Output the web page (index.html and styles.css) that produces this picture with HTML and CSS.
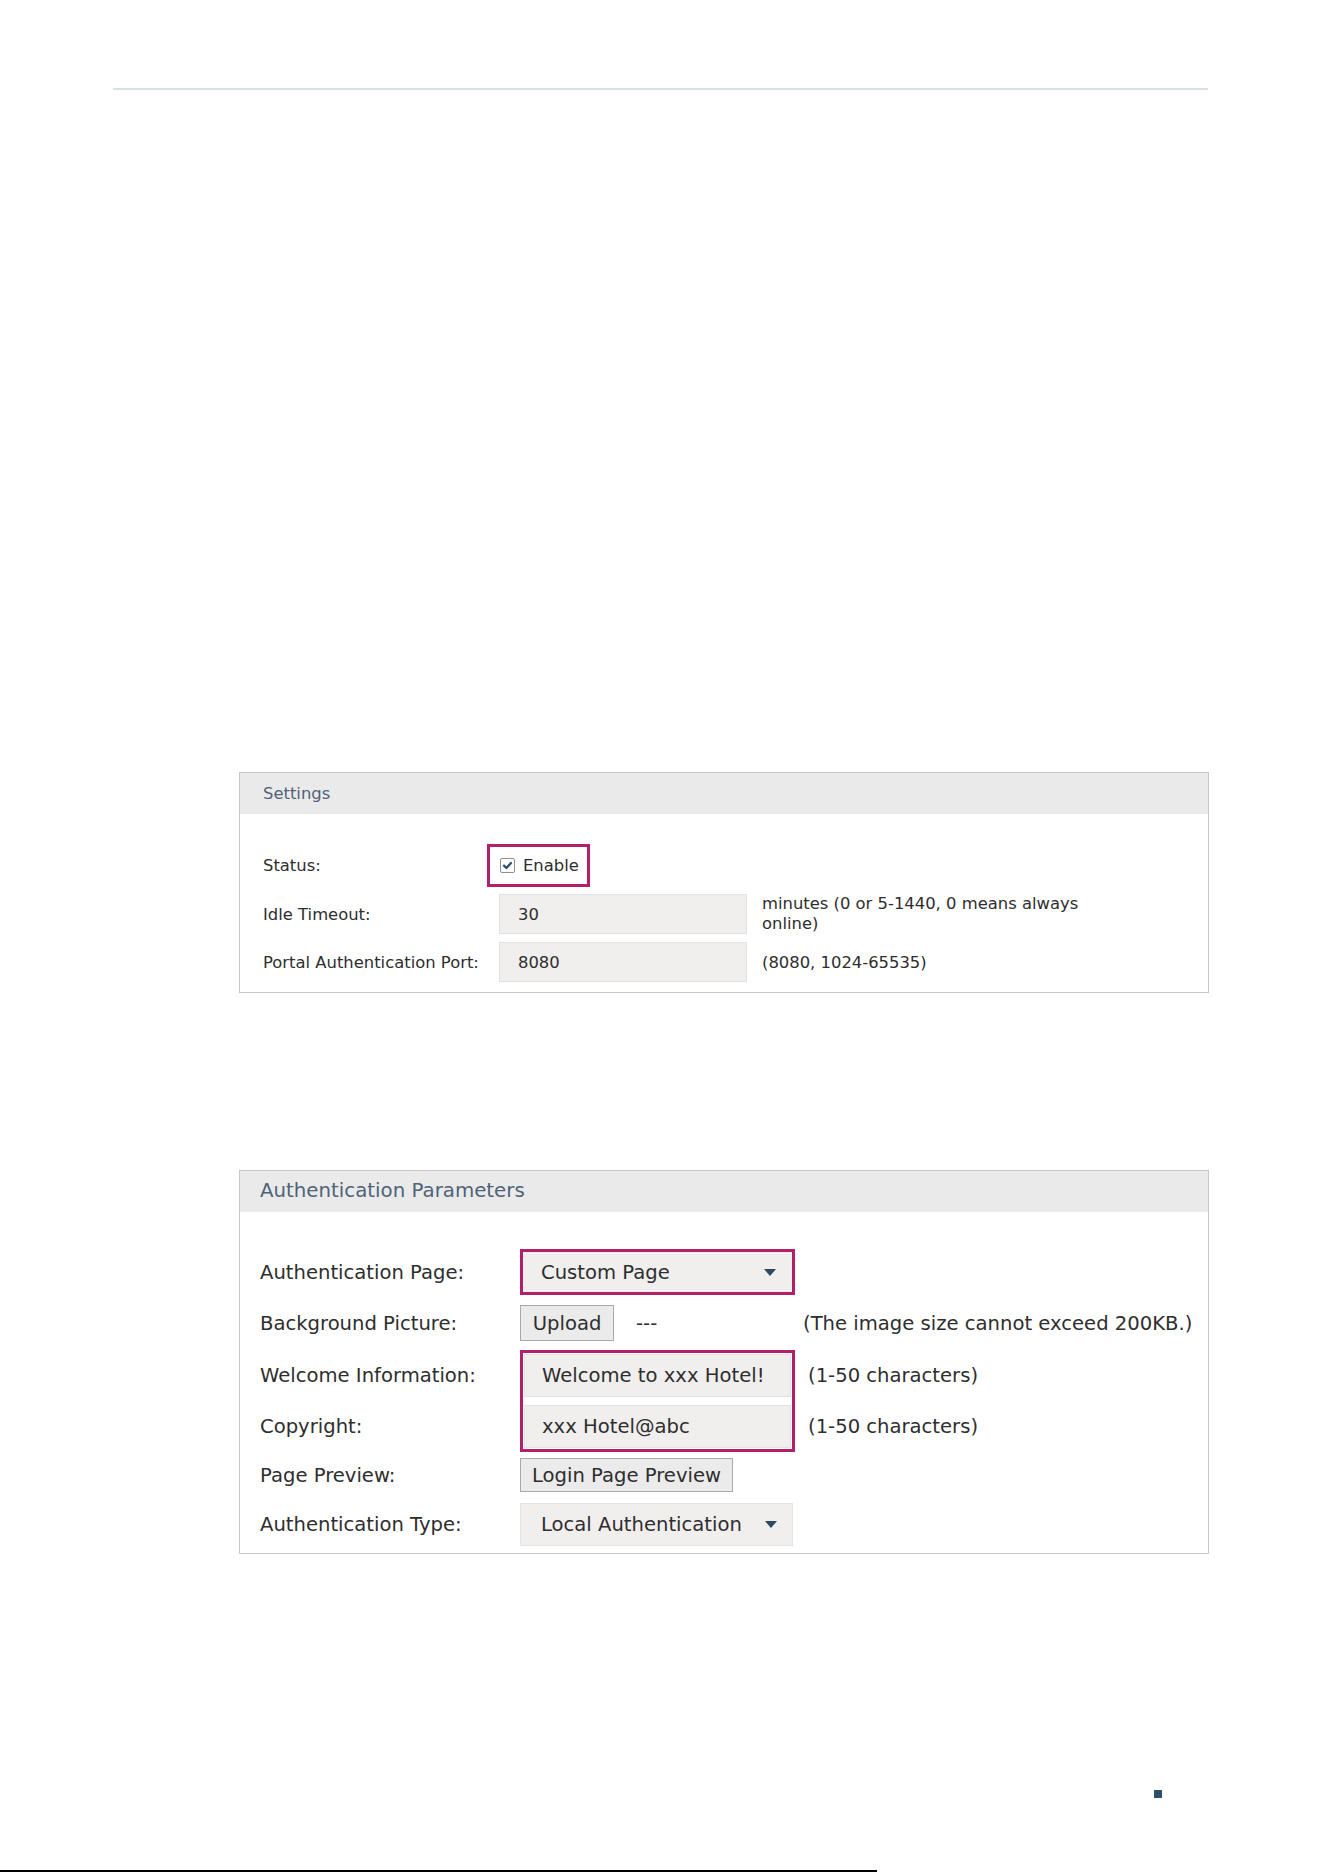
FILE: index.html
```html
<!DOCTYPE html>
<html>

<head>
    <title>Portal Authentication</title>
    <link rel="stylesheet" href="styles.css">
</head>

<body>

    <div class="page">
        <div class="top-rule"></div>

        <section class="panel panel-settings">
            <div class="panel-head">Settings</div>
            <div class="panel-body">
                <div class="row row-status">
                    <span class="label">Status:</span>
                    <span class="mark mark-status">
                        <span class="checkbox">
                            <svg width="11" height="11" viewBox="0 0 11 11"><path d="M2 5.6 L4.4 8 L9 3" fill="none" stroke="#2b4d6c" stroke-width="2.2" stroke-linecap="round" stroke-linejoin="round"/></svg>
                        </span>
                        Enable
                    </span>
                </div>
                <div class="row row-field">
                    <span class="label">Idle Timeout:</span>
                    <span class="field">30</span>
                    <span class="tip tip-wrap">minutes (0 or 5-1440, 0 means always online)</span>
                </div>
                <div class="row row-field">
                    <span class="label">Portal Authentication Port:</span>
                    <span class="field">8080</span>
                    <span class="tip">(8080, 1024-65535)</span>
                </div>
            </div>
        </section>

        <section class="panel panel-auth">
            <div class="panel-head">Authentication Parameters</div>
            <div class="panel-body">
                <div class="row row-page">
                    <span class="label">Authentication Page:</span>
                    <span class="mark mark-select">
                        <span class="select">
                            <span class="select-text">Custom Page</span>
                            <svg class="arrow" width="12" height="7" viewBox="0 0 12 7"><polygon points="0,0 12,0 6,7" fill="#2e4a60"/></svg>
                        </span>
                    </span>
                </div>
                <div class="row row-bg">
                    <span class="label">Background Picture:</span>
                    <span class="control">
                        <span class="btn btn-upload">Upload</span>
                        <span class="dashes">---</span>
                    </span>
                    <span class="tip tip-bg">(The image size cannot exceed 200KB.)</span>
                </div>
                <div class="group">
                    <span class="label">Welcome Information:</span>
                    <span class="mark mark-pair">
                        <span class="field field-auth">Welcome to xxx Hotel!</span>
                        <span class="field field-auth">xxx Hotel@abc</span>
                    </span>
                    <span class="tip tip-group">(1-50 characters)</span>
                    <span class="label">Copyright:</span>
                    <span class="tip tip-group">(1-50 characters)</span>
                </div>
                <div class="row row-preview">
                    <span class="label">Page Preview:</span>
                    <span class="btn btn-preview">Login Page Preview</span>
                </div>
                <div class="row row-type">
                    <span class="label">Authentication Type:</span>
                    <span class="select select-plain">
                        <span class="select-text">Local Authentication</span>
                        <svg class="arrow" width="12" height="7" viewBox="0 0 12 7"><polygon points="0,0 12,0 6,7" fill="#2e4a60"/></svg>
                    </span>
                </div>
            </div>
        </section>

        <div class="page-mark"></div>
        <div class="bottom-rule"></div>
    </div>

</body>

</html>
```

FILE: styles.css
```css
* {
    box-sizing: border-box;
}

body {
    margin: 0;
    font-family: "DejaVu Sans", Verdana, sans-serif;
    color: #2e2e2e;
    background-color: white;
}

.page {
    height: 1872px;
    display: flex;
    flex-direction: column;
    overflow: hidden;
}

.top-rule {
    margin: 88px 0 0 113px;
    width: 1095px;
    height: 2px;
    background-color: #d5e1e5;
}

.panel {
    margin-left: 239px;
    width: 970px;
    border: 1px solid #c6c6c6;
}

.panel-settings {
    margin-top: 682px;
    font-size: 16.4px;
}

.panel-auth {
    margin-top: 177px;
    font-size: 19.6px;
}

.panel-head {
    height: 41px;
    display: flex;
    align-items: center;
    background-color: #ebeaea;
    color: #4f6379;
}

.panel-settings .panel-head {
    padding-left: 23px;
    font-size: 16.4px;
}

.panel-auth .panel-head {
    padding: 0 0 3px 20px;
    font-size: 19.8px;
}

.panel-body {
    display: flex;
    flex-direction: column;
}

.panel-settings .panel-body {
    padding: 29px 0 10px 23px;
    gap: 8px;
}

.panel-auth .panel-body {
    padding: 37px 0 7px 20px;
}

.row {
    display: flex;
    align-items: center;
}

.label {
    flex: none;
}

.panel-settings .label {
    width: 236px;
}

.panel-auth .label {
    width: 260px;
}

.mark {
    border: 3px solid #b41f6b;
}

/* status checkbox */
.row-status {
    height: 43px;
    padding-top: 2px;
}

.mark-status {
    margin-left: -12px;
    width: 103px;
    height: 43px;
    padding-left: 10px;
    display: flex;
    align-items: center;
}

.checkbox {
    width: 15px;
    height: 15px;
    margin-right: 8px;
    border: 1px solid #8e8e8e;
    border-radius: 2px;
    background-color: white;
    display: flex;
    align-items: center;
    justify-content: center;
}

.row-field {
    height: 40px;
}

.field {
    flex: none;
    width: 248px;
    height: 40px;
    padding-left: 18px;
    display: flex;
    align-items: center;
    background-color: #f0efee;
    border: 1px solid #e2e2e2;
}

.tip {
    margin-left: 15px;
}

.tip-wrap {
    width: 330px;
    line-height: 20px;
}

/* auth rows */
.row-page {
    height: 46px;
    margin-bottom: 10px;
}

.row-bg {
    height: 36px;
    margin-bottom: 9px;
}

.row-preview {
    height: 34px;
    margin-bottom: 11px;
}

.row-type {
    height: 43px;
}

.mark-select {
    width: 275px;
    height: 46px;
}

.select {
    width: 100%;
    height: 100%;
    padding: 0 16px 0 18px;
    display: flex;
    align-items: center;
    justify-content: space-between;
    background-color: #f0efee;
}

.select-plain {
    flex: none;
    width: 273px;
    padding: 0 15px 0 20px;
    border: 1px solid #e3e3e3;
}

.select-text {
    white-space: nowrap;
}

.control {
    flex: none;
    width: 275px;
    display: flex;
    align-items: center;
}

.btn {
    flex: none;
    display: flex;
    align-items: center;
    justify-content: center;
    background-color: #ebebeb;
    border: 1px solid #a9a9a9;
}

.btn-upload {
    width: 94px;
    height: 36px;
}

.btn-preview {
    width: 213px;
    height: 34px;
}

.dashes {
    margin-left: 22px;
}

.tip-bg {
    margin-left: 8px;
    white-space: nowrap;
}

.group {
    height: 102px;
    margin-bottom: 6px;
    display: grid;
    grid-template-columns: 260px 275px auto;
    grid-template-rows: 51px 51px;
    align-items: center;
}

.mark-pair {
    grid-column: 2;
    grid-row: 1 / 3;
    align-self: stretch;
    padding: 1px;
    display: flex;
    flex-direction: column;
    gap: 8px;
}

.field-auth {
    width: 100%;
    height: 43px;
    padding-left: 17px;
    border-color: #e3e3e3;
}

.tip-group {
    margin-left: 13px;
}

.page-mark {
    margin: 236px 0 0 1154px;
    width: 8px;
    height: 8px;
    background-color: #2c5068;
}

.bottom-rule {
    margin-top: auto;
    width: 877px;
    height: 2px;
    background-color: #000;
}
```
